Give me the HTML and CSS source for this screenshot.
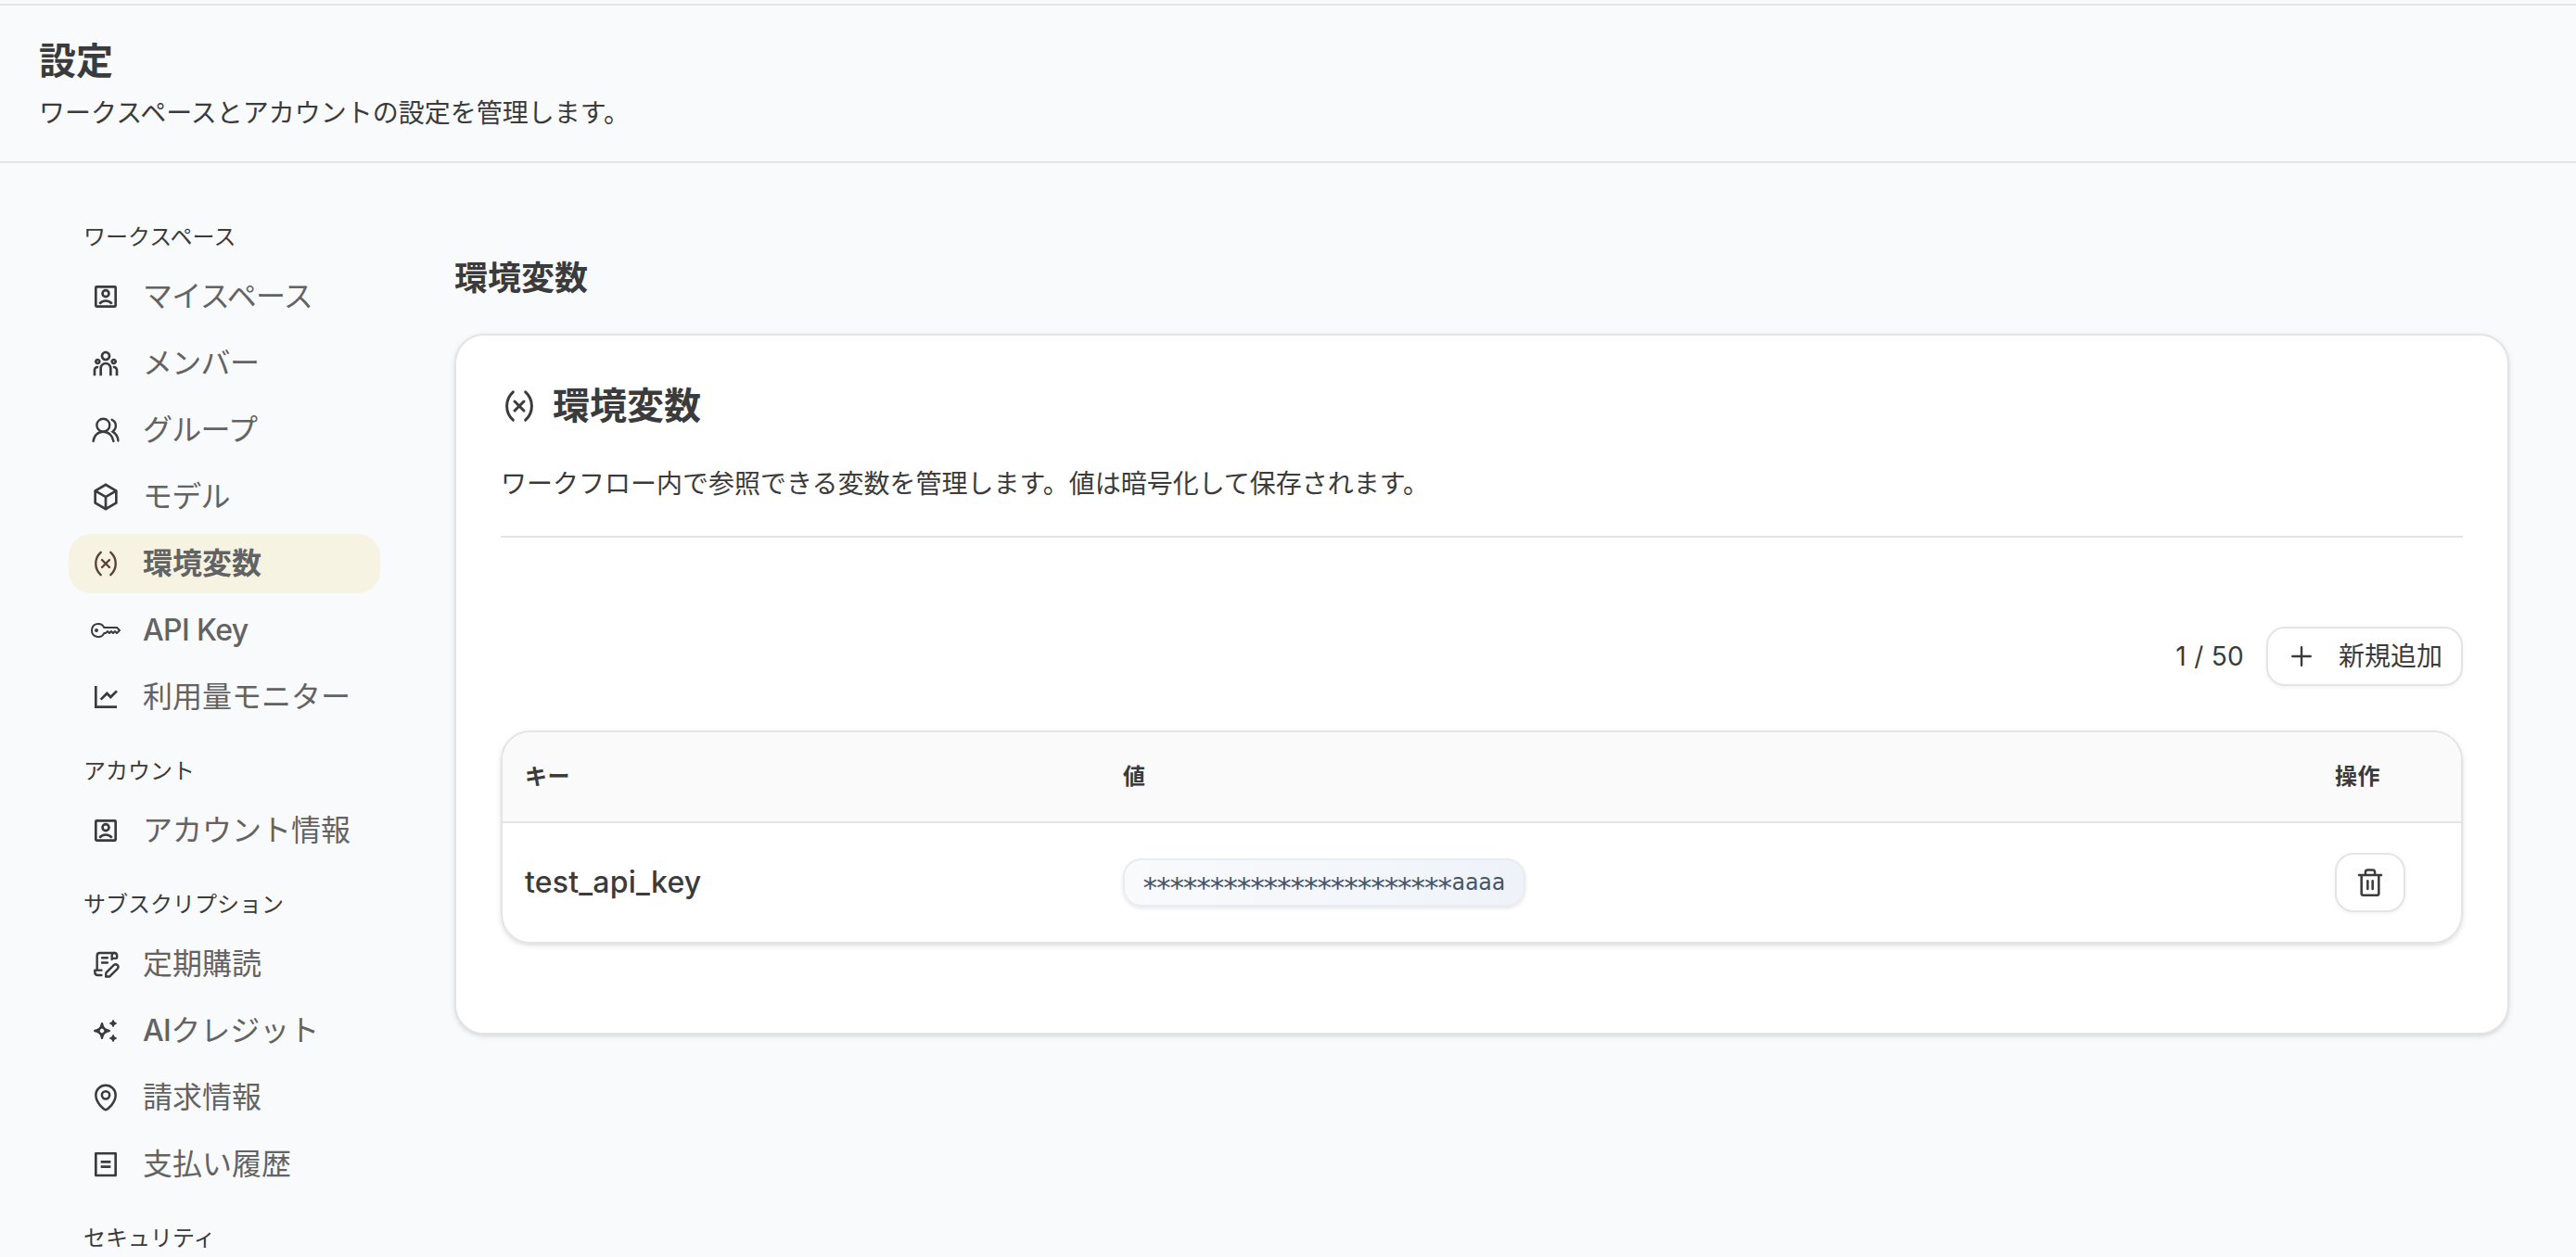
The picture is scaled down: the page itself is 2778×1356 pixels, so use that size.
FILE: index.html
```html
<!DOCTYPE html>
<html lang="ja">
<head>
  <meta charset="UTF-8">
  <title>設定 - 環境変数</title>
  <link rel="stylesheet" href="styles.css">
</head>
<body>

  <!-- 共通アイコン -->
  <svg class="sprite" xmlns="http://www.w3.org/2000/svg">
    <symbol id="i-account" viewBox="0 0 24 24">
      <g fill="none" stroke="currentColor" stroke-width="2">
        <rect x="4" y="4" width="16" height="16" rx="0.6"/>
        <circle cx="12" cy="9.5" r="2.6"/>
        <path d="M7 17.8C8.2 16.2 10 15.4 12 15.4s3.8.8 5 2.4"/>
      </g>
    </symbol>
    <symbol id="i-team" viewBox="0 0 24 24">
      <path fill="currentColor" d="M12 11C14.7614 11 17 13.2386 17 16V22H15V16C15 14.4023 13.7511 13.0963 12.1763 13.0051L12 13C10.4023 13 9.09634 14.2489 9.00509 15.8237L9 16V22H7V16C7 13.2386 9.23858 11 12 11ZM5.5 14C5.77885 14 6.05009 14.0326 6.3101 14.0942C6.14202 14.594 6.03873 15.122 6.00896 15.6693L6 16L6.0007 16.0856C5.88757 16.0456 5.76821 16.0187 5.64446 16.0069L5.5 16C4.7203 16 4.07955 16.5949 4.00687 17.3555L4 17.5V22H2V17.5C2 15.567 3.567 14 5.5 14ZM18.5 14C20.433 14 22 15.567 22 17.5V22H20V17.5C20 16.7203 19.4051 16.0796 18.6445 16.0069L18.5 16C18.3248 16 18.1566 16.03 18.0003 16.0852L18 16C18 15.3343 17.8916 14.694 17.6915 14.0956C17.9499 14.0326 18.2211 14 18.5 14ZM5.5 8C6.88071 8 8 9.11929 8 10.5C8 11.8807 6.88071 13 5.5 13C4.11929 13 3 11.8807 3 10.5C3 9.11929 4.11929 8 5.5 8ZM5.5 10C5.22386 10 5 10.2239 5 10.5C5 10.7761 5.22386 11 5.5 11C5.77614 11 6 10.7761 6 10.5C6 10.2239 5.77614 10 5.5 10ZM18.5 8C19.8807 8 21 9.11929 21 10.5C21 11.8807 19.8807 13 18.5 13C17.1193 13 16 11.8807 16 10.5C16 9.11929 17.1193 8 18.5 8ZM18.5 10C18.2239 10 18 10.2239 18 10.5C18 10.7761 18.2239 11 18.5 11C18.7761 11 19 10.7761 19 10.5C19 10.2239 18.7761 10 18.5 10ZM12 2C14.2091 2 16 3.79086 16 6C16 8.20914 14.2091 10 12 10C9.79086 10 8 8.20914 8 6C8 3.79086 9.79086 2 12 2ZM12 4C10.8954 4 10 4.89543 10 6C10 7.10457 10.8954 8 12 8C13.1046 8 14 7.10457 14 6C14 4.89543 13.1046 4 12 4Z"/>
    </symbol>
    <symbol id="i-group" viewBox="0 0 24 24">
      <g fill="none" stroke="currentColor" stroke-width="1.8" stroke-linecap="round">
        <circle cx="10" cy="8" r="5.2"/>
        <path d="M2 21C2.3 16.6 5.7 13.3 10 13.3s7.7 3.3 8.3 7.7"/>
        <path d="M17 3.6C21 5.4 21.2 10.6 17.6 13.2C20 14.6 21.8 17.2 22.1 20.6"/>
      </g>
    </symbol>
    <symbol id="i-box" viewBox="0 0 24 24">
      <path fill="currentColor" d="M12 1L21.5 6.5V17.5L12 23L2.5 17.5V6.5L12 1ZM5.49388 7.0777L12.0001 10.8444L18.5062 7.07774L12 3.311L5.49388 7.0777ZM4.5 8.81329V16.3469L11.0001 20.1101V12.5765L4.5 8.81329ZM13.0001 20.11L19.5 16.3469V8.81337L13.0001 12.5765V20.11Z"/>
    </symbol>
    <symbol id="i-variable" viewBox="0 0 24 24">
      <path fill="none" stroke="currentColor" stroke-width="1.8" stroke-linecap="round" stroke-linejoin="round" d="M8 2.9C2.6 7.8 2.6 16.2 8 21.1M16 2.9C21.4 7.8 21.4 16.2 16 21.1M9 9l6 6M15 9l-6 6"/>
    </symbol>
    <symbol id="i-key" viewBox="0 0 16 16">
      <path fill="currentColor" d="M0 8a4 4 0 0 1 7.465-2H14a.5.5 0 0 1 .354.146l1.5 1.5a.5.5 0 0 1 0 .708l-1.5 1.5a.5.5 0 0 1-.708 0L13 9.207l-.646.647a.5.5 0 0 1-.708 0L11 9.207l-.646.647a.5.5 0 0 1-.708 0L9 9.207l-.646.647A.5.5 0 0 1 8 10h-.535A4 4 0 0 1 0 8m4-3a3 3 0 1 0 2.712 4.285A.5.5 0 0 1 7.163 9h.63l.853-.854a.5.5 0 0 1 .708 0l.646.647.646-.647a.5.5 0 0 1 .708 0l.646.647.646-.647a.5.5 0 0 1 .708 0l.646.647.793-.793-1-1h-6.63a.5.5 0 0 1-.451-.285A3 3 0 0 0 4 5M4 8a1 1 0 1 1-2 0 1 1 0 0 1 2 0"/>
    </symbol>
    <symbol id="i-chart" viewBox="0 0 24 24">
      <path fill="currentColor" d="M5 3V19H21V21H3V3H5ZM20.2929 6.29289L21.7071 7.70711L16 13.4142L13 10.415L8.70711 14.7071L7.29289 13.2929L13 7.58579L16 10.585L20.2929 6.29289Z"/>
    </symbol>
    <symbol id="i-contract" viewBox="0 0 24 24">
      <g fill="none" stroke="currentColor" stroke-width="1.8" stroke-linecap="round" stroke-linejoin="round">
        <path d="M5 16.6V5.2C5 3.8 6 3 7.2 3H19.4"/>
        <path d="M17 8.2V5C17 3.6 17.9 3 19 3s2.1.8 2.1 2.1V6.6c0 .5-.3.8-.8.8H17.3"/>
        <path d="M9 6.9h4.4M9 10.9h4.4"/>
        <path d="M8.6 17H3.2V18.4C3.2 20 4.2 21 5.7 21H8.6"/>
        <path d="M12.1 22.1L12.3 19.1L18.5 12.9C20.6 11.1 23.3 13.7 21.5 15.8L15.2 22.1Z"/>
      </g>
    </symbol>
    <symbol id="i-sparkle" viewBox="0 0 24 24">
      <path fill="none" stroke="currentColor" stroke-width="1.8" stroke-linejoin="round" d="M9 6.2Q9.7 11.3 14.8 12Q9.7 12.7 9 17.8Q8.3 12.7 3.2 12Q8.3 11.3 9 6.2Z"/>
      <circle cx="9" cy="12" r="2.5" fill="none" stroke="currentColor" stroke-width="1.4"/>
      <path fill="currentColor" stroke="currentColor" stroke-width=".8" stroke-linejoin="round" d="M18 3.4L18.9 5.1L20.6 6L18.9 6.9L18 8.6L17.1 6.9L15.4 6L17.1 5.1ZM18 15.4L18.9 17.1L20.6 18L18.9 18.9L18 20.6L17.1 18.9L15.4 18L17.1 17.1Z"/>
    </symbol>
    <symbol id="i-pin" viewBox="0 0 24 24">
      <g fill="none" stroke="currentColor" stroke-width="1.9" stroke-linejoin="round">
        <path d="M12 22C10.5 21.4 4 16.6 4 10a8 8 0 0 1 16 0C20 16.6 13.5 21.4 12 22Z"/>
        <circle cx="12" cy="10" r="3.1"/>
      </g>
    </symbol>
    <symbol id="i-bill" viewBox="0 0 24 24">
      <path fill="none" stroke="currentColor" stroke-width="2" stroke-linejoin="round" d="M4 3.2H20V21H4ZM8 10H16M8 14H16"/>
    </symbol>
    <symbol id="i-plus" viewBox="0 0 24 24">
      <path fill="none" stroke="currentColor" stroke-width="1.8" stroke-linecap="round" d="M12 4.7V19.3M4.7 12H19.3"/>
    </symbol>
    <symbol id="i-trash" viewBox="0 0 24 24">
      <path fill="none" stroke="currentColor" stroke-width="1.9" stroke-linecap="round" stroke-linejoin="round" d="M3 6H21M5 6V21C5 21.8 5.5 22.3 6.3 22.3H17.7C18.5 22.3 19 21.8 19 21V6M8.2 6V3.5C8.2 2.4 8.9 1.8 9.9 1.8H14.1C15.1 1.8 15.8 2.4 15.8 3.5V6M10 10.7V17.3M14 10.7V17.3"/>
    </symbol>
  </svg>

  <header class="page-header">
    <h1>設定</h1>
    <p>ワークスペースとアカウントの設定を管理します。</p>
  </header>

  <div class="layout">
    <nav class="sidebar">
      <h3>ワークスペース</h3>
      <ul>
        <li><svg class="icon"><use href="#i-account"/></svg><span class="tight">マイスペース</span></li>
        <li><svg class="icon"><use href="#i-team"/></svg><span class="tight">メンバー</span></li>
        <li><svg class="icon"><use href="#i-group"/></svg><span class="tight">グループ</span></li>
        <li><svg class="icon"><use href="#i-box"/></svg><span class="tight">モデル</span></li>
        <li class="active"><svg class="icon"><use href="#i-variable"/></svg><span>環境変数</span></li>
        <li><svg class="icon"><use href="#i-key"/></svg><span class="latin">API Key</span></li>
        <li><svg class="icon"><use href="#i-chart"/></svg><span>利用量モニター</span></li>
      </ul>
      <h3>アカウント</h3>
      <ul>
        <li><svg class="icon"><use href="#i-account"/></svg><span>アカウント情報</span></li>
      </ul>
      <h3>サブスクリプション</h3>
      <ul>
        <li><svg class="icon"><use href="#i-contract"/></svg><span>定期購読</span></li>
        <li><svg class="icon"><use href="#i-sparkle"/></svg><span><span class="latin">AI</span>クレジット</span></li>
        <li><svg class="icon"><use href="#i-pin"/></svg><span>請求情報</span></li>
        <li><svg class="icon"><use href="#i-bill"/></svg><span>支払い履歴</span></li>
      </ul>
      <h3>セキュリティ</h3>
    </nav>

    <main>
      <h2>環境変数</h2>
      <section class="card">
        <div class="card-title">
          <svg class="icon"><use href="#i-variable"/></svg>
          <span>環境変数</span>
        </div>
        <p class="card-desc">ワークフロー内で参照できる変数を管理します。値は暗号化して保存されます。</p>

        <div class="toolbar">
          <span class="count">1 / 50</span>
          <button class="btn"><svg class="icon"><use href="#i-plus"/></svg>新規追加</button>
        </div>

        <div class="table">
          <div class="row head">
            <div>キー</div>
            <div>値</div>
            <div>操作</div>
          </div>
          <div class="row">
            <div class="key">test_api_key</div>
            <div><code class="chip"><span class="mask">***********************</span>aaaa</code></div>
            <div><button class="btn"><svg class="icon"><use href="#i-trash"/></svg></button></div>
          </div>
        </div>
      </section>
    </main>
  </div>

</body>
</html>
```
FILE: styles.css
```css
* { box-sizing: border-box; }
body {
  margin: 0;
  padding-top: 4px;
  height: 1356px;
  overflow: hidden;
  background: #f9fafc;
  color: #3b3b3b;
  font-family: Inter, "Noto Sans CJK JP", sans-serif;
  font-size: 28px;
  line-height: 1.5;
}
h1, h2, h3, p, ul { margin: 0; padding: 0; }
ul { list-style: none; }
.sprite { display: none; }
.icon {
  width: 32px;
  height: 32px;
  flex: none;
  display: block;
}
.tight { letter-spacing: -0.7px; }
.latin { font-weight: 500; letter-spacing: -0.6px; }

/* header */
.page-header {
  height: 172px;
  padding: 32px 42px 0;
  border-top: 2px solid #e4e4e4;
  border-bottom: 2px solid #e4e4e4;
}
.page-header h1 { font-size: 40px; line-height: 56px; }
.page-header p { line-height: 40px; margin-top: 8px; }

.layout {
  display: flex;
  align-items: flex-start;
}

/* sidebar */
.sidebar {
  width: 336px;
  margin: 64px 80px 0 74px;
  flex: none;
}
.sidebar h3 {
  margin: 32px 0 16px;
  padding-left: 16px;
  font-size: 24px;
  line-height: 32px;
  font-weight: 400;
}
.sidebar h3:first-child { margin-top: 0; }
.sidebar ul {
  display: flex;
  flex-direction: column;
  gap: 8px;
}
.sidebar li {
  height: 64px;
  padding: 0 24px;
  display: flex;
  align-items: center;
  gap: 24px;
  border-radius: 24px;
  font-size: 32px;
  white-space: nowrap;
}
.sidebar li span { color: #636363; }
.sidebar li.active { background: #f7f3e3; font-weight: 700; }
.sidebar li.active .icon { color: #5c4033; }

/* content */
main {
  flex: 1;
  margin-right: 72px;
  padding-top: 98px;
}
main h2 { font-size: 36px; line-height: 52px; }
.card {
  height: 756px;
  margin-top: 34px;
  padding: 48px;
  background: #fff;
  border: 2px solid #e4e4e4;
  border-radius: 32px;
  box-shadow: 0 2px 6px rgba(0,0,0,.1), 0 2px 4px -2px rgba(0,0,0,.1);
}
.card-title {
  display: flex;
  align-items: center;
  gap: 16px;
  height: 56px;
  font-size: 40px;
  font-weight: 700;
}
.card-title .icon { width: 40px; height: 40px; }
.card-desc {
  margin-top: 36px;
  padding-bottom: 36px;
  line-height: 40px;
  border-bottom: 2px solid #e4e4e4;
}
.toolbar {
  display: flex;
  justify-content: flex-end;
  align-items: center;
  gap: 24px;
  margin: 96px 0 48px;
}
.count { letter-spacing: .3px; }
.btn {
  display: flex;
  align-items: center;
  gap: 24px;
  height: 64px;
  padding: 0 20px;
  background: #fff;
  border: 2px solid #e4e4e4;
  border-radius: 20px;
  box-shadow: 0 2px 4px rgba(0,0,0,.05);
  color: inherit;
  font: inherit;
}

/* table */
.table {
  border: 2px solid #e4e4e4;
  border-radius: 32px;
  overflow: hidden;
  box-shadow: 0 2px 6px rgba(0,0,0,.1), 0 2px 4px -2px rgba(0,0,0,.1);
}
.row {
  display: grid;
  grid-template-columns: 645px 1fr 160px;
  align-items: center;
  height: 128px;
}
.row > div { padding: 0 24px; }
.head {
  height: 98px;
  background: #fafafa;
  border-bottom: 2px solid #e4e4e4;
  font-size: 24px;
  font-weight: 700;
  letter-spacing: .6px;
}
.key { font-size: 32px; font-weight: 500; letter-spacing: .2px; }
.chip {
  display: block;
  width: fit-content;
  height: 52px;
  line-height: 48px;
  padding: 0 20px;
  border: 2px solid #e9ecf0;
  border-radius: 20px;
  background: linear-gradient(90deg, #f9fafc, #eff3f9);
  box-shadow: 0 2px 4px rgba(0,0,0,.1);
  color: #475569;
  font-family: "DejaVu Sans Mono", monospace;
  font-size: 24px;
}
/* larger stars on the same 24px character grid */
.mask {
  position: relative;
  top: 8px;
  font-size: 31px;
  line-height: 1;
  letter-spacing: -4.21px;
  margin-left: -2px;
  margin-right: 2px;
}
```
